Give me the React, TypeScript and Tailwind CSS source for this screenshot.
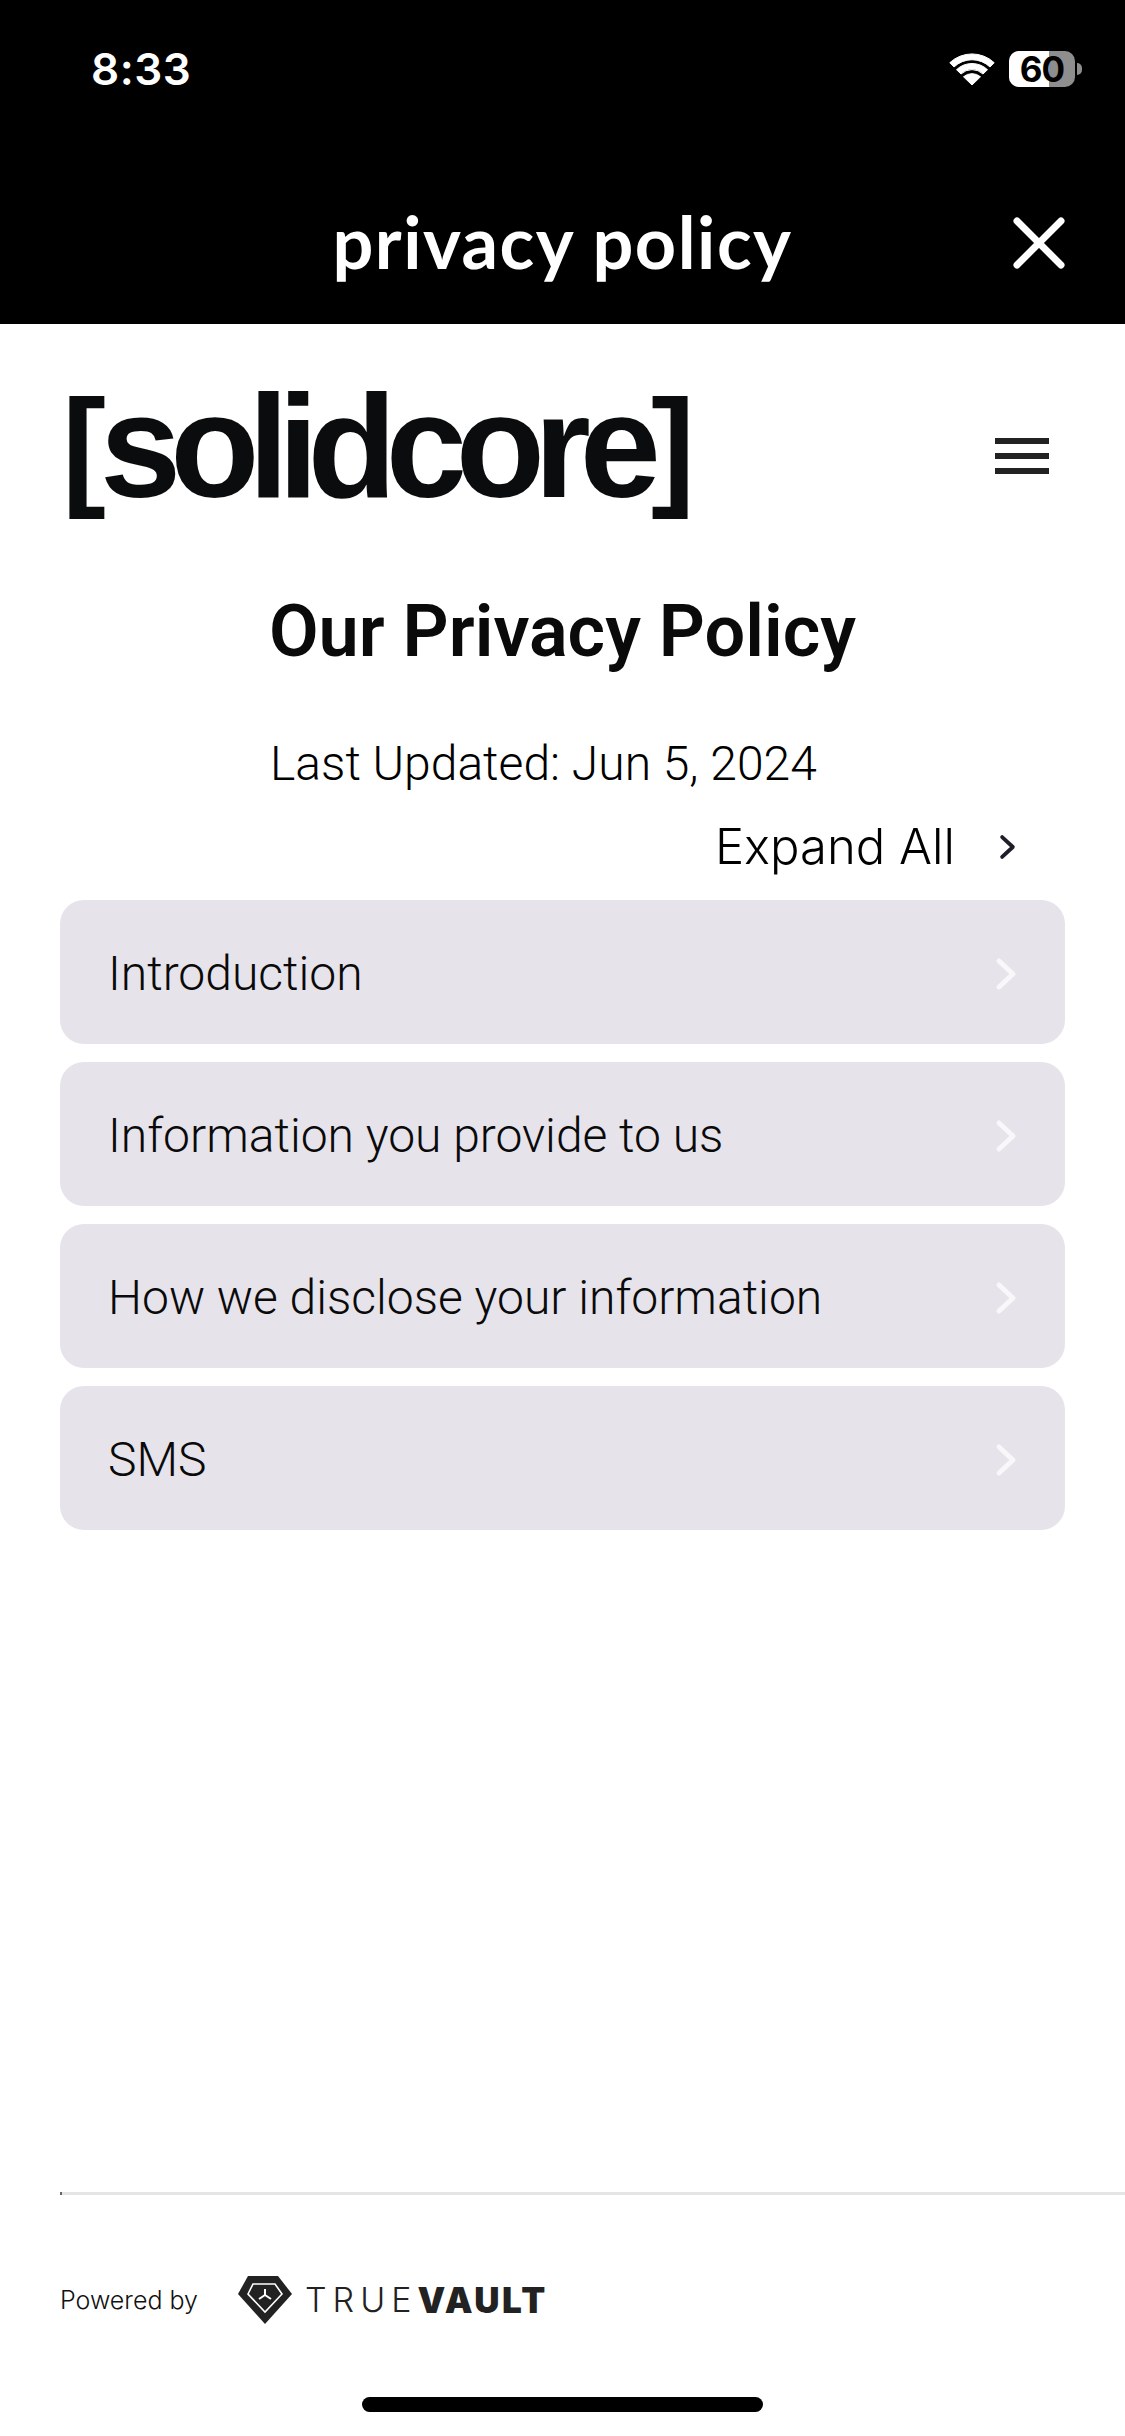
const rows = ["Introduction", "Information you provide to us", "How we disclose your information", "SMS"]

const Wifi = () => (
  <svg width="46" height="33" viewBox="0 0 46 33" fill="#fff" stroke="#fff" strokeWidth="1" strokeLinejoin="round">
    <path d="M23 32 L14.5 23.8 A13 13 0 0 1 31.5 23.8 Z" />
    <path d="M7.5 16.7 A22.5 22.5 0 0 1 38.5 16.7 L34 21 A16 16 0 0 0 12 21 Z" />
    <path d="M0.8 9.7 A32.5 32.5 0 0 1 45.2 9.7 L41 14 A26 26 0 0 0 5 14 Z" />
  </svg>
)

const Battery = () => (
  <div className="flex items-center">
    <div className="relative w-[66px] h-[36px] rounded-[10px] bg-[#8e8e8e]">
      <div className="w-[40px] h-full rounded-l-[10px] bg-white" />
      <span className="absolute inset-0 flex items-center justify-center text-[35px] leading-none font-bold tracking-[-1px] text-black [font-family:Inter,sans-serif]">
        60
      </span>
    </div>
    <div className="ml-[2px] w-[5px] h-[12px] rounded-r-full bg-[#8e8e8e]" />
  </div>
)

const Chevron = ({ color, w, h, sw }: { color: string; w: number; h: number; sw: number }) => (
  <svg width={w} height={h} viewBox="0 0 22 34" fill="none" stroke={color} strokeWidth={sw} strokeLinecap="round" strokeLinejoin="round">
    <path d="M4 4 L18 17 L4 30" />
  </svg>
)

const VaultMark = () => (
  <svg width="54" height="48" viewBox="0 0 54 48">
    <path d="M10 0 H40 L54 18 L27 48 L0 18 Z" fill="#222" />
    <path d="M15 8 H37 L44 18 L27 36 L10 18 Z" fill="none" stroke="#fff" strokeWidth="1.6" />
    <path d="M27 13 V19 M27 19 L21 23 M27 19 L33 23" fill="none" stroke="#fff" strokeWidth="2" />
  </svg>
)

export default function App() {
  return (
    <div className="w-[1125px] h-[2436px] flex flex-col bg-white overflow-hidden [font-family:Roboto,sans-serif]">
      <header className="h-[324px] bg-black text-white shrink-0 flex flex-col">
        <div className="flex items-center justify-between pl-[91px] pr-[43px] pt-[44px]">
          <span className="text-[44px] leading-[50px] font-semibold tracking-[0.5px] [font-family:Inter,sans-serif]">8:33</span>
          <div className="flex items-center gap-[14px]">
            <Wifi />
            <Battery />
          </div>
        </div>
        <div className="relative mt-[107px] flex justify-center">
          <h1 className="text-[72px] leading-[80px] font-bold tracking-[1.5px] [font-family:Lato,sans-serif]">privacy policy</h1>
          <svg className="absolute right-[60px] top-[16px]" width="52" height="52" viewBox="0 0 52 52" stroke="#fff" strokeWidth="7" strokeLinecap="round">
            <path d="M4 4 L48 48 M48 4 L4 48" />
          </svg>
        </div>
      </header>

      <main className="flex-1 flex flex-col">
        <div className="flex items-center justify-between pl-[62px] pr-[76px] pt-[59px]">
          <div className="flex items-center h-[128px] text-[#0a0c0d] font-bold [font-family:'Liberation_Sans',Arial,sans-serif] leading-none">
            <span className="text-[132px] tracking-[-6px]">[</span>
            <span className="text-[146px] tracking-[-11px]">solidcore</span>
            <span className="text-[132px] ml-[1px]">]</span>
          </div>
          <div className="mt-[18px] flex flex-col gap-[9px]">
            <div className="w-[54px] h-[6px] bg-[#222]" />
            <div className="w-[54px] h-[6px] bg-[#222]" />
            <div className="w-[54px] h-[6px] bg-[#222]" />
          </div>
        </div>

        <h2 className="mt-[79px] text-center text-[72px] leading-[84px] font-semibold text-[#0a0a0a]">Our Privacy Policy</h2>

        <p className="mt-[60px] pl-[270px] text-[48px] leading-[60px] font-light text-black">Last Updated: Jun 5, 2024</p>

        <div className="mt-[25px] pr-[109px] flex items-center justify-end gap-[44px]">
          <span className="text-[49px] leading-[56px] font-light text-black [font-family:Inter,sans-serif]">Expand All</span>
          <Chevron color="#1e1e2a" w={17} h={26} sw={5} />
        </div>

        <div className="mt-[25px] px-[60px] flex flex-col gap-[18px]">
          {rows.map((row) => (
            <div key={row} className="h-[144px] rounded-[24px] bg-[#e6e3eb] pt-[3px] pl-[48px] pr-[48px] flex items-center justify-between">
              <span className="text-[48px] font-light text-[#0a0a0a]">{row}</span>
              <Chevron color="#f8f7fa" w={22} h={34} sw={5} />
            </div>
          ))}
        </div>

        <div className="mt-auto ml-[60px] h-[3px] bg-[#e5e5e5] border-l-2 border-l-[#666]" />

        <div className="mt-[81px] pl-[60px] flex items-center">
          <span className="w-[178px] text-[25px] leading-[32px] font-light text-[#111] [font-family:Inter,sans-serif]">Powered by</span>
          <VaultMark />
          <span className="ml-[13px] text-[34px] leading-none font-light tracking-[6px] text-[#222] [font-family:Inter,sans-serif]">TRUE</span>
          <span className="text-[35px] leading-none font-black tracking-[2.5px] text-[#222] [font-family:Inter,sans-serif]">VAULT</span>
        </div>

        <div className="mt-[73px] mb-[24px] self-center w-[401px] h-[15px] rounded-full bg-black" />
      </main>
    </div>
  )
}
